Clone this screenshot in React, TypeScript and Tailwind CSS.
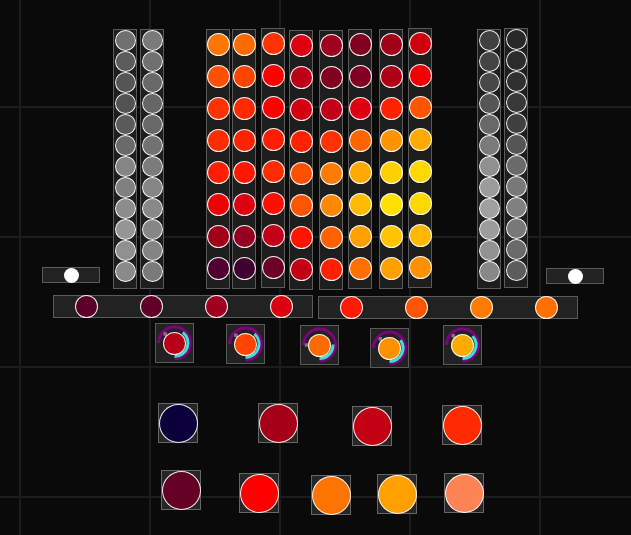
import * as React from "react"

// Patch-Canvas mit frei platzierten Modulen (Spalten, Slider, Knobs, Pads)

type Pos = { x: number; y: number }

const grayLeft = [
  { x: 113, y: 29, colors: ["#707070", "#5c5c5c", "#555555", "#525252", "#5a5a5a", "#6a6a6a", "#858585", "#808080", "#8c8c8c", "#959595", "#909090", "#8a8a8a"] },
  { x: 140, y: 29, colors: ["#7a7a7a", "#707070", "#686868", "#666666", "#686868", "#727272", "#7c7c7c", "#858585", "#888888", "#868686", "#848484", "#7a7a7a"] },
]

const grayRight = [
  { x: 477, y: 29, colors: ["#404040", "#444444", "#484848", "#555555", "#686868", "#7a7a7a", "#909090", "#9c9c9c", "#a0a0a0", "#9c9c9c", "#929292", "#888888"] },
  { x: 504, y: 28, colors: ["#282828", "#2c2c2c", "#303030", "#383838", "#404040", "#555555", "#6a6a6a", "#787878", "#808080", "#787878", "#6a6a6a", "#5c5c5c"] },
]

const heatCols = [
  { x: 206, y: 29, colors: ["#ff7700", "#ff5000", "#ff3300", "#ff2c00", "#ff1e00", "#ee0000", "#a0001a", "#4f0030"] },
  { x: 232, y: 29, colors: ["#ff6a00", "#ff4400", "#ff2a00", "#ff2400", "#ff1800", "#dd0010", "#960020", "#400030"] },
  { x: 261, y: 28, colors: ["#ff3300", "#ff0000", "#ff0000", "#ff1c00", "#ff2c00", "#ff1000", "#c20018", "#6c0028"] },
  { x: 289, y: 30, colors: ["#dd0010", "#bb0018", "#d40010", "#ff2200", "#ff5000", "#ff5400", "#ff1400", "#c20014"] },
  { x: 319, y: 30, colors: ["#a00020", "#800020", "#c00018", "#ff3200", "#ff7a00", "#ff8800", "#ff6000", "#ff2000"] },
  { x: 348, y: 29, colors: ["#800020", "#800024", "#dd0010", "#ff6400", "#ffaa00", "#ffbb00", "#ffa000", "#ff7000"] },
  { x: 379, y: 29, colors: ["#a00018", "#b00018", "#ff2200", "#ff9400", "#ffd000", "#ffe000", "#ffc400", "#ffa000"] },
  { x: 408, y: 28, colors: ["#d0000c", "#f00000", "#ff5400", "#ffaa00", "#ffd800", "#ffd800", "#ffb800", "#ff9000"] },
]

const bars = [
  { x: 53, y: 295, colors: ["#5a0028", "#600028", "#a00020", "#dd0010"] },
  { x: 318, y: 296, colors: ["#ff1a00", "#ff5500", "#ff7a00", "#ff7000"] },
]

const knobs = [
  { x: 155, y: 323, color: "#b80018", cyan: 38, dot: -46 },
  { x: 226, y: 324, color: "#ff4400", cyan: 42, dot: -48 },
  { x: 300, y: 325, color: "#ff6a00", cyan: 88, dot: -90 },
  { x: 370, y: 328, color: "#ff9000", cyan: 54, dot: -45 },
  { x: 443, y: 325, color: "#ffaa00", cyan: 49, dot: -45 },
]

const pads = [
  { x: 158, y: 403, color: "#0c003a" },
  { x: 258, y: 403, color: "#a50018" },
  { x: 352, y: 406, color: "#c40014" },
  { x: 442, y: 405, color: "#ff2a00" },
  { x: 161, y: 470, color: "#640024" },
  { x: 239, y: 473, color: "#ff0000" },
  { x: 311, y: 475, color: "#ff7400" },
  { x: 377, y: 474, color: "#ffa000" },
  { x: 444, y: 473, color: "#ff8455" },
]

function at(p: Pos): React.CSSProperties {
  return { left: p.x, top: p.y }
}

function Dot({ color, className }: { color: string; className: string }) {
  return (
    <div
      className={`shrink-0 rounded-full border-[1.5px] border-white/90 ${className}`}
      style={{ backgroundColor: color }}
    />
  )
}

function GrayColumn({ x, y, colors }: Pos & { colors: string[] }) {
  return (
    <div
      className="absolute w-[24px] h-[260px] flex flex-col items-center bg-[#1e1e1e] border border-[#5a5a5a]"
      style={at({ x, y })}
    >
      {colors.map((c, i) => (
        <Dot key={i} color={c} className="w-[21px] h-[21px]" />
      ))}
    </div>
  )
}

function HeatColumn({ x, y, colors }: Pos & { colors: string[] }) {
  return (
    <div
      className="absolute w-[24px] h-[260px] flex flex-col items-center gap-[9px] pt-[3px] bg-[#1e1e1e] border border-[#5a5a5a]"
      style={at({ x, y })}
    >
      {colors.map((c, i) => (
        <Dot key={i} color={c} className="w-[23px] h-[23px]" />
      ))}
    </div>
  )
}

function Toggle({ x, y }: Pos) {
  return (
    <div
      className="absolute w-[58px] h-[16px] flex items-center justify-center bg-[#222222] border border-[#5a5a5a]"
      style={at({ x, y })}
    >
      <div className="w-[15px] h-[15px] rounded-full bg-white" />
    </div>
  )
}

function Bar({ x, y, colors }: Pos & { colors: string[] }) {
  return (
    <div
      className="absolute w-[260px] h-[23px] flex items-center gap-[42px] pl-[21px] bg-[#222222] border border-[#5a5a5a]"
      style={at({ x, y })}
    >
      {colors.map((c, i) => (
        <Dot key={i} color={c} className="w-[23px] h-[23px]" />
      ))}
    </div>
  )
}

// Punkt auf dem Kreis, Winkel im Uhrzeigersinn ab 12 Uhr
function pt(r: number, deg: number) {
  const a = (deg * Math.PI) / 180
  return `${(19.5 + r * Math.sin(a)).toFixed(2)} ${(20 - r * Math.cos(a)).toFixed(2)}`
}

function Knob({ x, y, color, cyan, dot }: Pos & { color: string; cyan: number; dot: number }) {
  const d = pt(13, dot).split(" ").map(Number)
  return (
    <div
      className="absolute w-[39px] h-[40px] flex items-center justify-center bg-[#222222] border border-[#5a5a5a]"
      style={at({ x, y })}
    >
      <svg className="absolute -left-px -top-px w-[39px] h-[40px]" viewBox="0 0 39 40">
        <path
          d={`M ${pt(16, -90)} A 16 16 0 1 1 ${pt(16, 180)}`}
          fill="none"
          stroke="#800080"
          strokeWidth="3"
        />
        <path
          d={`M ${pt(13.5, cyan)} A 13.5 13.5 0 0 1 ${pt(13.5, 180)}`}
          fill="none"
          stroke="#40e0d0"
          strokeWidth="3"
        />
        <rect x={d[0] - 1.75} y={d[1] - 1.75} width="3.5" height="3.5" fill="#7a7a7a" />
      </svg>
      <Dot color={color} className="relative w-[23px] h-[23px]" />
    </div>
  )
}

function Pad({ x, y, color }: Pos & { color: string }) {
  return (
    <div
      className="absolute w-[40px] h-[40px] flex items-center justify-center bg-[#262626] border border-[#666666]"
      style={at({ x, y })}
    >
      <Dot color={color} className="w-[39px] h-[39px]" />
    </div>
  )
}

export default function App() {
  return (
    <div className="relative w-[631px] h-[535px] overflow-hidden bg-[#0a0a0a] bg-[linear-gradient(to_right,#1c1c1c_2px,transparent_2px),linear-gradient(to_bottom,#1c1c1c_2px,transparent_2px)] bg-[size:130px_130px] bg-[position:19px_106px]">
      {grayLeft.map((c, i) => (
        <GrayColumn key={`gl${i}`} {...c} />
      ))}
      {heatCols.map((c, i) => (
        <HeatColumn key={`h${i}`} {...c} />
      ))}
      {grayRight.map((c, i) => (
        <GrayColumn key={`gr${i}`} {...c} />
      ))}

      <Toggle x={42} y={267} />
      <Toggle x={546} y={268} />

      {bars.map((b, i) => (
        <Bar key={`b${i}`} {...b} />
      ))}

      {knobs.map((k, i) => (
        <Knob key={`k${i}`} {...k} />
      ))}

      {pads.map((p, i) => (
        <Pad key={`p${i}`} {...p} />
      ))}
    </div>
  )
}
